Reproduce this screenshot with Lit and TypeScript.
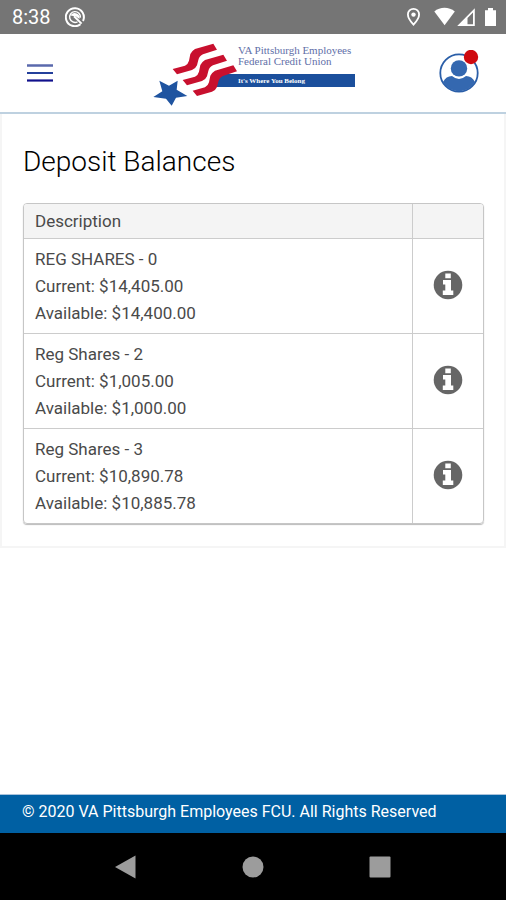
import { LitElement, html, css, svg } from "lit";
import { customElement } from "lit/decorators.js";

interface Account {
  name: string;
  current: string;
  available: string;
}

const ACCOUNTS: Account[] = [
  { name: "REG SHARES - 0", current: "$14,405.00", available: "$14,400.00" },
  { name: "Reg Shares - 2", current: "$1,005.00", available: "$1,000.00" },
  { name: "Reg Shares - 3", current: "$10,890.78", available: "$10,885.78" },
];

@customElement("status-bar")
class StatusBar extends LitElement {
  static styles = css`
    :host {
      display: flex;
      align-items: center;
      justify-content: space-between;
      height: 34px;
      padding: 0 9px 0 12px;
      background: #757575;
      color: #fff;
      font-size: 20px;
      box-sizing: border-box;
    }
    .side {
      display: flex;
      align-items: center;
      gap: 14px;
    }
    svg {
      display: block;
    }
  `;
  render() {
    return html`
      <div class="side">
        <span>8:38</span>
        <svg width="20" height="20" viewBox="0 0 20 20" fill="none" stroke="#fff">
          <path d="M15.500 17.200A9 9 0 1 1 18 14" stroke-width="2" />
          <path d="M12.500 14.800A5.400 5.400 0 1 1 15.400 10.600" stroke-width="1.400" />
          <path d="M5.500 8.500C7 5.500 12 4.800 14.700 9.500L14.500 12L11 9.500Z" fill="#fff" stroke="none" />
          <path d="M9 9.200L16.600 16.600" stroke-width="2" />
        </svg>
      </div>
      <svg width="91" height="20" viewBox="0 0 91 20" fill="#fff">
        <path
          d="M7.500 1.800a5.600 5.600 0 0 0-5.600 5.600C1.900 11.500 7.500 17.600 7.500 17.600S13.100 11.500 13.100 7.400A5.600 5.600 0 0 0 7.500 1.800Z"
          fill="none" stroke="#fff" stroke-width="1.800" />
        <circle cx="7.500" cy="7.600" r="2.200" />
        <path d="M28.300 4.400C34 -.4 43 -.4 48.800 4.400L38.600 18.200Z" />
        <path fill-rule="evenodd" d="M68.800 1.200V19H51.200ZM67 5.600L61.500 11V17.200H67Z" />
        <path d="M79 3.200H82V1H87V3.200H90V19H79Z" />
      </svg>
    `;
  }
}

@customElement("brand-logo")
class BrandLogo extends LitElement {
  static styles = css`
    :host {
      display: block;
    }
    svg {
      display: block;
    }
    .name {
      font: 11px "Liberation Serif", serif;
      fill: #5f6fa8;
    }
    .motto {
      font: bold 7px "Liberation Serif", serif;
      fill: #fff;
    }
  `;
  render() {
    const stripe =
      "M83 99L120 89Q129 85 132 74L136 54Q139 46 150 39L205 23L216 41L174 55Q163 60 160 72L156 88Q152 98 141 102L96 115Z";
    return html`
      <svg width="216" height="78" viewBox="0 -2 216 78" role="img" aria-label="VA Pittsburgh Employees Federal Credit Union">
        <path d="M74 38H210V51H66Z" fill="#1b4f9c" />
        <g transform="scale(.33333)">
          ${[[0, 0], [30, 33], [60, 65]].map(
            ([x, y]) => svg`<path d=${stripe} transform="translate(${x} ${y})" fill="#c8102e" />`
          )}
          <path d="M43 134L72 149L98 134L95 161L127 180L93 185L80 209L63 188L25 183L52 166Z" fill="#1f54a0" />
        </g>
        <text class="name" x="93" y="18">VA Pittsburgh Employees</text>
        <text class="name" x="93" y="29">Federal Credit Union</text>
        <text class="motto" x="93" y="47">It's Where You Belong</text>
      </svg>
    `;
  }
}

@customElement("app-header")
class AppHeader extends LitElement {
  static styles = css`
    :host {
      display: grid;
      grid-template-columns: 1fr auto 1fr;
      align-items: center;
      height: 80px;
      padding: 0 24px;
      border-bottom: 2px solid #bed1e0;
      background: #fff;
      box-sizing: border-box;
    }
    button {
      display: block;
      padding: 0;
      border: 0;
      background: none;
      cursor: pointer;
    }
    .menu {
      justify-self: start;
    }
    .profile {
      justify-self: end;
    }
    svg {
      display: block;
    }
  `;
  render() {
    return html`
      <button class="menu" aria-label="Menu">
        <svg width="32" height="24" viewBox="0 0 32 24">
          <path d="M3 4.500H29" stroke="#5a69ac" stroke-width="2.500" />
          <path d="M3 12H29" stroke="#233f9b" stroke-width="2" />
          <path d="M3 19.500H29" stroke="#10108c" stroke-width="2.200" />
        </svg>
      </button>
      <brand-logo></brand-logo>
      <button class="profile" aria-label="Profile, new notifications">
        <svg width="44" height="46" viewBox="0 2 44 46">
          <circle cx="21" cy="25" r="18.700" fill="#fff" stroke="#2a5ea8" stroke-width="1.800" />
          <circle cx="21" cy="20.400" r="8.200" fill="#3468b0" />
          <path d="M5 34C7 30 10 28 14 28Q21 34 28 28C32 28 35 30 37 34A18.500 18.500 0 0 1 5 34Z" fill="#3468b0" />
          <circle cx="33" cy="9" r="7.200" fill="#cf0a0f" />
        </svg>
      </button>
    `;
  }
}

@customElement("balance-table")
class BalanceTable extends LitElement {
  static styles = css`
    :host {
      display: block;
    }
    table {
      width: 100%;
      border: 1px solid #c6c6c6;
      border-radius: 4px;
      border-spacing: 0;
      box-shadow: 0 1px 1px #bbb;
      font-size: 17px;
      line-height: 27px;
      color: #4a4a4a;
      overflow: hidden;
    }
    th,
    td {
      padding: 7px 11px 6px;
      border-bottom: 1px solid #ccc;
      text-align: left;
      font-weight: 400;
    }
    th {
      padding: 4px 11px 3px;
      background: #f4f4f4;
    }
    tbody tr:last-child td {
      border-bottom: 0;
    }
    .action {
      width: 71px;
      padding: 0 0 2px;
      border-left: 1px solid #ccc;
      box-sizing: border-box;
    }
    button {
      display: block;
      margin: 0 auto;
      padding: 0;
      border: 0;
      background: none;
      cursor: pointer;
    }
    svg {
      display: block;
    }
  `;
  render() {
    return html`
      <table>
        <thead>
          <tr>
            <th scope="col">Description</th>
            <th class="action" scope="col" aria-label="Details"></th>
          </tr>
        </thead>
        <tbody>
          ${ACCOUNTS.map(
            (a) => html`
              <tr>
                <td>
                  <div>${a.name}</div>
                  <div>Current: ${a.current}</div>
                  <div>Available: ${a.available}</div>
                </td>
                <td class="action">
                  <button aria-label="Details for ${a.name}">
                    <svg width="30" height="30" viewBox="0 0 30 30">
                      <circle cx="15" cy="15" r="14.300" fill="#666" />
                      <path
                        d="M12.300 3.600H17.800V8.200H12.300ZM10 10H18V20.600H20.300V25H9.800V20.600H12.300V14.400H10Z"
                        fill="#fff" />
                    </svg>
                  </button>
                </td>
              </tr>
            `
          )}
        </tbody>
      </table>
    `;
  }
}

@customElement("system-nav")
class SystemNav extends LitElement {
  static styles = css`
    :host {
      display: grid;
      grid-template-columns: repeat(3, 1fr);
      align-items: center;
      justify-items: center;
      height: 67px;
      padding: 0 62px;
      background: #000;
      box-sizing: border-box;
    }
    button {
      display: block;
      padding: 0;
      border: 0;
      background: none;
      cursor: pointer;
    }
    svg {
      display: block;
      fill: #9c9c9c;
    }
  `;
  render() {
    return html`
      <button aria-label="Back">
        <svg width="24" height="24" viewBox="0 0 24 24"><path d="M1 12L21.500 .5V23.500Z" /></svg>
      </button>
      <button aria-label="Home">
        <svg width="24" height="24" viewBox="0 0 24 24"><circle cx="12" cy="12" r="10.500" /></svg>
      </button>
      <button aria-label="Recent apps">
        <svg width="24" height="24" viewBox="0 0 24 24"><rect x="1.500" y="1.500" width="21" height="21" rx="1" /></svg>
      </button>
    `;
  }
}

@customElement("app-root")
class AppRoot extends LitElement {
  static styles = css`
    :host {
      display: flex;
      flex-direction: column;
      min-height: 100vh;
      background: #fff;
      font-family: Roboto, "Liberation Sans", sans-serif;
    }
    main {
      flex: 1;
    }
    .panel {
      padding: 30px 20px 22px 21px;
      border: 2px solid #f5f5f5;
      border-top: 0;
    }
    h1 {
      margin: 0 0 23px;
      font-size: 28px;
      line-height: 36px;
      font-weight: 300;
      color: #000;
    }
    footer {
      height: 39px;
      padding: 0 22px;
      border-top: 1px solid #a9c3dc;
      background: #0060a3;
      color: #fff;
      font-size: 16px;
      line-height: 34px;
      box-sizing: border-box;
    }
  `;
  render() {
    return html`
      <status-bar></status-bar>
      <app-header></app-header>
      <main>
        <section class="panel">
          <h1>Deposit Balances</h1>
          <balance-table></balance-table>
        </section>
      </main>
      <footer>© 2020 VA Pittsburgh Employees FCU. All Rights Reserved</footer>
      <system-nav></system-nav>
    `;
  }
}
